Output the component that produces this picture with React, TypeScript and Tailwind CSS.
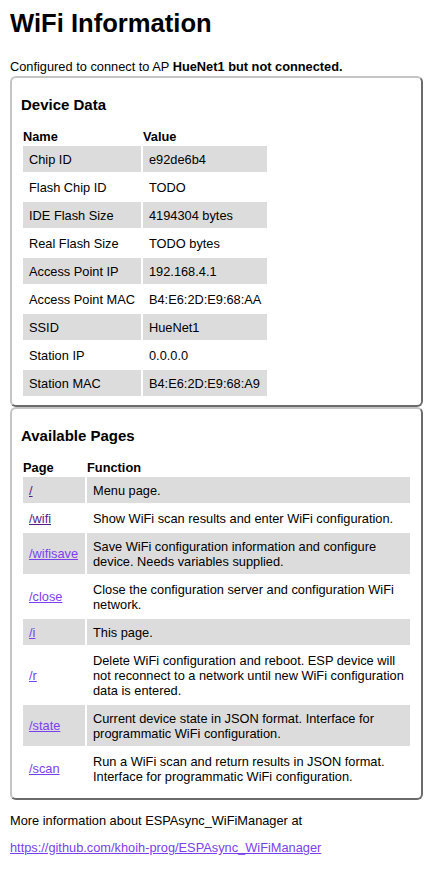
import React from "react";

const deviceRows: [string, string][] = [
  ["Chip ID", "e92de6b4"],
  ["Flash Chip ID", "TODO"],
  ["IDE Flash Size", "4194304 bytes"],
  ["Real Flash Size", "TODO bytes"],
  ["Access Point IP", "192.168.4.1"],
  ["Access Point MAC", "B4:E6:2D:E9:68:AA"],
  ["SSID", "HueNet1"],
  ["Station IP", "0.0.0.0"],
  ["Station MAC", "B4:E6:2D:E9:68:A9"],
];

const pageRows: { page: string; visited: boolean; fn: string[] }[] = [
  { page: "/", visited: true, fn: ["Menu page."] },
  { page: "/wifi", visited: true, fn: ["Show WiFi scan results and enter WiFi configuration."] },
  { page: "/wifisave", visited: false, fn: ["Save WiFi configuration information and configure", "device. Needs variables supplied."] },
  { page: "/close", visited: false, fn: ["Close the configuration server and configuration WiFi", "network."] },
  { page: "/i", visited: false, fn: ["This page."] },
  { page: "/r", visited: false, fn: ["Delete WiFi configuration and reboot. ESP device will", "not reconnect to a network until new WiFi configuration", "data is entered."] },
  { page: "/state", visited: false, fn: ["Current device state in JSON format. Interface for", "programmatic WiFi configuration."] },
  { page: "/scan", visited: false, fn: ["Run a WiFi scan and return results in JSON format.", "Interface for programmatic WiFi configuration."] },
];

function Box({ title, children }: { title: string; children: React.ReactNode }) {
  return (
    <div className="w-[413px] rounded-[6px] border-2 border-t-[#c4c4c4] border-l-[#c4c4c4] border-r-[#6b6b6b] border-b-[#6b6b6b] pt-[18px] px-[9px] pb-[7px]">
      <h3 className="text-[15px] leading-[18px] font-bold mb-[13px]">{title}</h3>
      {children}
    </div>
  );
}

export default function App() {
  return (
    <div
      className="px-[10px] text-[12.8px] leading-[15px] text-black bg-white min-h-[882px]"
      style={{ fontFamily: '"Liberation Sans", Arial, sans-serif' }}
    >
      <h1 className="pt-[8px] text-[25.6px] leading-[30px] font-bold">WiFi Information</h1>
      <p className="mt-[21px]">
        Configured to connect to AP <b>HueNet1 but not connected.</b>
      </p>
      <div className="mt-[2px]">
        <Box title="Device Data">
          <table className="border-separate border-spacing-[2px]">
            <thead>
              <tr>
                <th className="text-left p-0 leading-[15px] font-bold">Name</th>
                <th className="text-left p-0 leading-[15px] font-bold">Value</th>
              </tr>
            </thead>
            <tbody>
              {deviceRows.map(([n, v], i) => (
                <tr key={n} className={i % 2 === 0 ? "bg-[#dcdcdc]" : ""}>
                  <td className="px-[6px] py-[5.5px] leading-[15px] whitespace-nowrap">{n}</td>
                  <td className="px-[6px] py-[5.5px] leading-[15px] whitespace-nowrap">{v}</td>
                </tr>
              ))}
            </tbody>
          </table>
        </Box>
        <Box title="Available Pages">
          <table className="w-full border-separate border-spacing-[2px]">
            <thead>
              <tr>
                <th className="text-left p-0 leading-[15px] font-bold w-[62px]">Page</th>
                <th className="text-left p-0 leading-[15px] font-bold">Function</th>
              </tr>
            </thead>
            <tbody>
              {pageRows.map((r, i) => (
                <tr key={r.page} className={i % 2 === 0 ? "bg-[#dcdcdc]" : ""}>
                  <td className="px-[6px] py-[5.5px] leading-[15px] align-middle whitespace-nowrap">
                    <a
                      href="#"
                      className={
                        "underline " + (r.visited ? "text-[#551a8b]" : "text-[#7b3ff2]")
                      }
                    >
                      {r.page}
                    </a>
                  </td>
                  <td className="px-[6px] py-[5.5px] leading-[15px] align-middle">
                    {r.fn.map((line, j) => (
                      <React.Fragment key={j}>
                        {j > 0 && <br />}
                        <span className="whitespace-nowrap">{line}</span>
                      </React.Fragment>
                    ))}
                  </td>
                </tr>
              ))}
            </tbody>
          </table>
        </Box>
      </div>
      <p className="mt-[13px]">More information about ESPAsync_WiFiManager at</p>
      <p className="mt-[12px]">
        <a href="#" className="underline text-[#7b3ff2]">
          https://github.com/khoih-prog/ESPAsync_WiFiManager
        </a>
      </p>
    </div>
  );
}
